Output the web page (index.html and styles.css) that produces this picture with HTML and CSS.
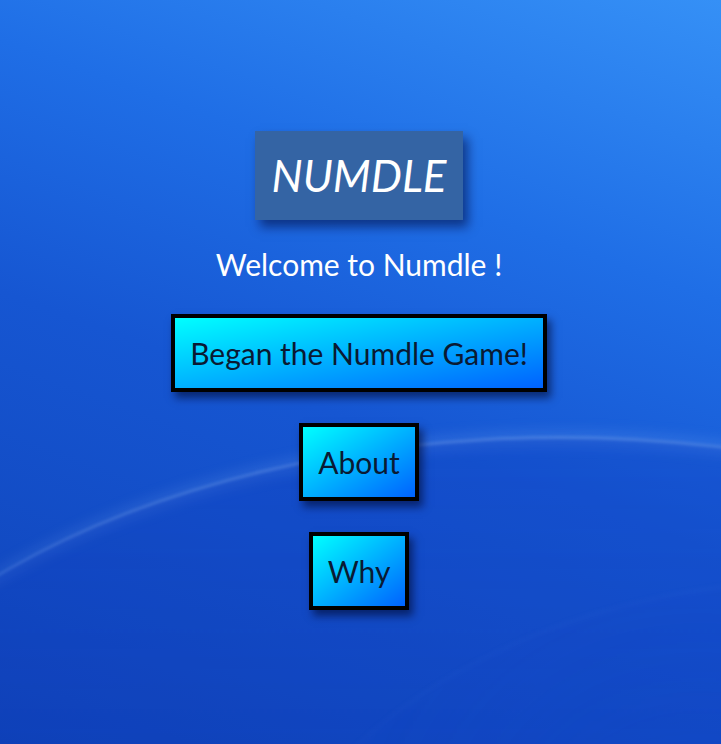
FILE: index.html
```html
<!DOCTYPE html>
<html lang="en">
<head>
<meta charset="utf-8">
<title>Numdle</title>
<link rel="stylesheet" href="styles.css">
</head>
<body>
<div class="wallpaper">
  <div class="arc arc-glow"></div>
  <div class="arc arc-light"></div>
  <div class="arc arc-dark"></div>
</div>
<main class="home">
  <h1 class="logo">NUMDLE</h1>
  <p class="welcome">Welcome to Numdle !</p>
  <nav class="menu">
    <button class="btn">Began the Numdle Game!</button>
    <button class="btn">About</button>
    <button class="btn">Why</button>
  </nav>
</main>
</body>
</html>
```
FILE: styles.css
```css
html, body {
  margin: 0;
  padding: 0;
  height: 100%;
}
body {
  font-family: "Lato", "Noto Sans", sans-serif;
  background: linear-gradient(200deg, #3590f6 0%, #1f6ee6 30%, #1656d2 55%, #0f42b8 100%);
  overflow: hidden;
  position: relative;
}
.wallpaper {
  position: absolute;
  inset: 0;
  overflow: hidden;
  pointer-events: none;
}
.arc {
  position: absolute;
  border-radius: 50%;
}
.arc-glow {
  left: -220px;
  top: 432px;
  width: 1560px;
  height: 900px;
  border-top: 12px solid rgba(150, 195, 255, 0.2);
  filter: blur(7px);
}
.arc-light {
  left: -220px;
  top: 436px;
  width: 1560px;
  height: 900px;
  border-top: 3px solid rgba(170, 210, 255, 0.25);
  background: linear-gradient(to bottom, rgba(15, 60, 190, 0.28), rgba(10, 50, 170, 0.1));
  filter: blur(1.5px);
}
.arc-dark {
  left: 220px;
  top: 580px;
  width: 1200px;
  height: 900px;
  background: radial-gradient(ellipse at 40% 30%, rgba(20, 70, 200, 0.25), rgba(10, 40, 160, 0.0) 70%);
  border-top: 2px solid rgba(90, 140, 230, 0.12);
  filter: blur(2px);
}
.home {
  position: relative;
  display: flex;
  flex-direction: column;
  align-items: center;
  padding-top: 131px;
  padding-right: 3px;
}
.logo {
  margin: 0;
  background: #3464a4;
  color: #ffffff;
  font-style: italic;
  font-weight: 400;
  font-size: 44px;
  line-height: 57px;
  padding: 16px 16px;
  box-shadow: 5px 7px 10px rgba(0, 10, 60, 0.55);
}
.welcome {
  margin: 24px 0 0;
  color: #ffffff;
  font-size: 30px;
  line-height: 40px;
}
.menu {
  margin-top: 30px;
  display: flex;
  flex-direction: column;
  align-items: center;
  gap: 31px;
}
.btn {
  font-family: inherit;
  font-size: 30px;
  line-height: 38px;
  color: #0a1a33;
  background: linear-gradient(to bottom right, #00ffff, #0062ff);
  border: 4px solid #000000;
  padding: 16px 15px;
  box-shadow: 4px 6px 8px rgba(0, 10, 50, 0.6);
  cursor: pointer;
}
```
